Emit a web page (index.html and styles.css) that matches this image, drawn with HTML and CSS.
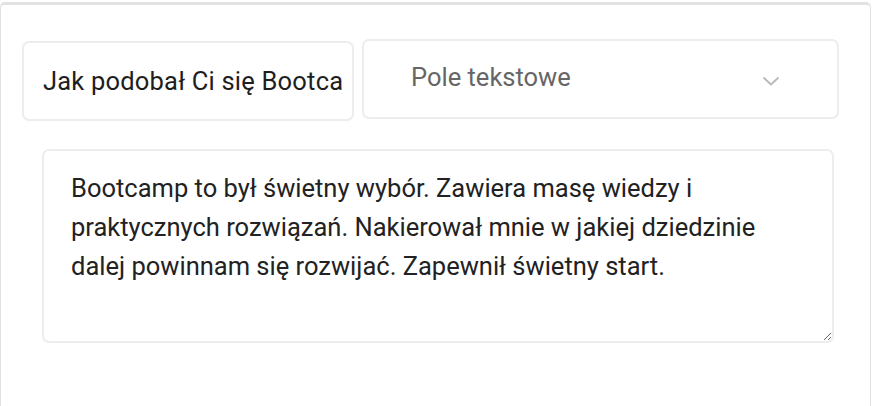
FILE: index.html
```html
<!DOCTYPE html>
<html lang="pl">
<head>
<meta charset="utf-8">
<link rel="stylesheet" href="styles.css">
</head>
<body>
<div class="card">
  <div class="row">
    <input class="field question" type="text" value="Jak podobał Ci się Bootcamp?">
    <div class="field select">
      <span class="select-label">Pole tekstowe</span>
      <svg class="chevron" width="18" height="10" viewBox="0 0 18 10"><path d="M1.5 1.5 L9 8.5 L16.5 1.5" fill="none" stroke="#b8b8b8" stroke-width="1.8"/></svg>
    </div>
  </div>
  <textarea class="answer">Bootcamp to był świetny wybór. Zawiera masę wiedzy i praktycznych rozwiązań. Nakierował mnie w jakiej dziedzinie dalej powinnam się rozwijać. Zapewnił świetny start.</textarea>
</div>
</body>
</html>
```
FILE: styles.css
```css
html, body {
  margin: 0;
  padding: 0;
  background: #fff;
}
body {
  font-family: Roboto, "Noto Sans", Arial, sans-serif;
  color: #222;
}
.card {
  margin-top: 2px;
  width: 871px;
  height: 420px;
  border: 1px solid #e2e2e2;
  border-top: 3px solid #e2e2e2;
  border-radius: 5px;
  box-sizing: border-box;
  padding: 34px 0 0 21px;
}
.row {
  display: flex;
  align-items: flex-start;
  gap: 8px;
}
.field {
  box-sizing: border-box;
  height: 80px;
  border: 2px solid #ededed;
  border-radius: 7px;
  background: #fff;
  margin: 0;
}
.question {
  display: block;
  margin-top: 2px;
  width: 332px;
  padding: 0 9px 0 19px;
  font-family: Roboto, "Noto Sans", Arial, sans-serif;
  font-size: 25.5px;
  letter-spacing: 0.2px;
  color: #1e1e1e;
  outline: none;
}
.select {
  width: 477px;
  display: flex;
  align-items: center;
  justify-content: space-between;
  padding: 0 57px 0 47px;
}
.select-label {
  font-size: 25.5px;
  color: #666;
  margin-top: -4px;
}
.chevron {
  margin-top: 4px;
}
.answer {
  display: block;
  box-sizing: border-box;
  margin: 28px 0 0 20px;
  width: 792px;
  height: 194px;
  border: 2px solid #ededed;
  border-radius: 7px;
  padding: 18px 41px 0 27px;
  font-family: Roboto, "Noto Sans", Arial, sans-serif;
  font-size: 25.5px;
  line-height: 39px;
  color: #222;
  resize: both;
  overflow: hidden;
  outline: none;
}
```
